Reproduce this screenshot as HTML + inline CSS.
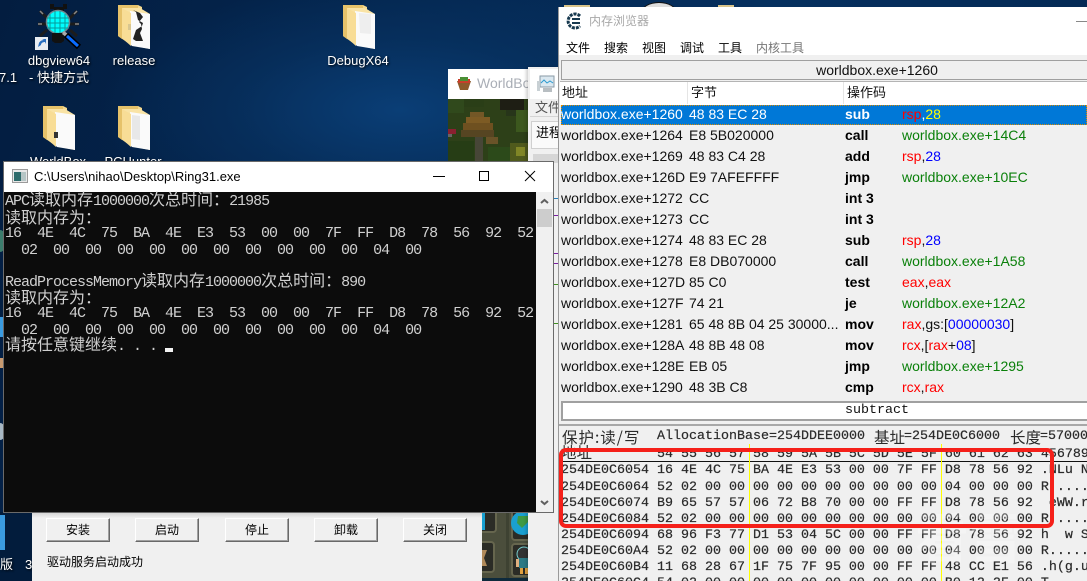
<!DOCTYPE html>
<html><head><meta charset="utf-8">
<style>
html,body{margin:0;padding:0;width:1087px;height:581px;overflow:hidden;background:#04244f}
body{position:relative;font-family:"Liberation Sans","Noto Sans CJK SC",sans-serif}
div,span{position:absolute;white-space:pre}
.dl{color:#fff;font-size:13px;line-height:17px;text-shadow:1px 1px 2px #000;text-align:center}
.con{left:5px;color:#d0d0d0;font:15px/16px "Liberation Mono",monospace;letter-spacing:-1px;height:16px}
.con i{font:normal 16px/16px "WenQuanYi Zen Hei","Noto Sans CJK SC",sans-serif;letter-spacing:0}
.btn{top:518px;width:62px;height:22px;background:#f0f0f0;border:1px solid;border-color:#fff #696969 #696969 #fff;box-shadow:inset -1px -1px 0 #a0a0a0;color:#000;font-size:12px;line-height:23px;text-align:center}
.m{top:40px;font-size:12px;line-height:16px;color:#000}
.r{left:561px;width:526px;height:21px;font-size:14px;line-height:21px;color:#111;font-family:"Liberation Sans",sans-serif}
.r span{top:0}
.a{left:0}.b{left:128px}.o{left:284px;font-weight:bold;color:#000}.g{left:341px;color:#0a800a}.x{left:341px}
.R{position:static;color:#f00}.B{position:static;color:#00f}.K{position:static;color:#111}
.h{left:561px;width:526px;height:16px;font:13.33px/16px "Liberation Mono",monospace;color:#2a2a2a;-webkit-text-stroke:.2px #2a2a2a}
.c{font:15.5px/16px "Noto Sans CJK SC",sans-serif;-webkit-text-stroke:0;top:0}
</style></head><body>

<!-- desktop background -->
<div style="left:0;top:0;width:1087px;height:581px;background:radial-gradient(ellipse 300px 130px at 400px 110px,#0a3e76 0%,rgba(8,52,100,.6) 55%,rgba(4,36,79,0) 100%),linear-gradient(110deg,#031d40 0%,#04264f 30%,#05305f 60%,#04264f 100%)"></div>
<div style="left:0;top:512px;width:32px;height:69px;background:#021c3c"></div>

<!-- desktop icons -->
<svg style="position:absolute;left:0;top:0" width="560" height="170">
<defs>
<g id="fo">
<path d="M0 1h20l4 2v36H10L0 32z" fill="#f5d98e"/>
<path d="M0 1h20v3H4v31L0 32z" fill="#e6c26a"/>
<path d="M4 4h18l10 6v35l-10-2-8-2-10-7z" fill="#f9e3a5"/>
<path d="M12 7l20 3v35l-18-3-2-2z" fill="#fafafa"/>
<path d="M4 4v30l9 8V9z" fill="#f8dd96"/>
</g>
</defs>
<!-- bug -->
<g>
<path d="M50 4h4v5h-4zM63 4h4v5h-4zM54 7h10v5H54z" fill="#111"/>
<path d="M40 11l8 8M77 11l-8 8M38 24h9M70 24h9M40 36l7-6M77 36l-7-6" stroke="#1c1c1c" stroke-width="3" fill="none"/>
<path d="M40 11l3 3M77 11l-3 3M38 24h4M75 24h4" stroke="#888" stroke-width="1.500"/>
<circle cx="58" cy="22" r="11.500" fill="#0ff"/>
<circle cx="58" cy="22" r="11.500" fill="none" stroke="#6f8a90" stroke-width="1.500"/>
<path d="M55 11v22M60 11v22M65 14v16M50 14v16M47 18h22M47 23h22M47 28h22" stroke="#089a9a" stroke-width="1"/>
<path d="M52 33h12v8l-3 2h-6l-3-2z" fill="#111"/>
<path d="M64 31l4 3-2 3-4-3z" fill="#aaa"/>
<path d="M66 35l13 12" stroke="#000" stroke-width="6"/>
<path d="M67 36l11 10" stroke="#0a6cff" stroke-width="3"/>
</g>
<rect x="35" y="37" width="13" height="13" fill="#e9edf2"/>
<path d="M38 47l1-4c1-2 3-3 5-3l-2-1h4v5l-1-2c-2 0-4 1-4 3z" fill="#2a6fc0"/>
<use href="#fo" x="118" y="4"/>
<path d="M133 10l3 2 2 8 5 3-1 3-6 4-3 9 3 2 7 0-3-8 2-4-1-5-2-2 4-5-3-4z" fill="#222"/>
<rect x="128" y="24" width="3" height="6" fill="#d8c690"/>
<use href="#fo" x="343" y="4"/>
<path d="M359 13l12 1v20l-11-1z" fill="#eee"/>
<use href="#fo" x="43" y="105"/>
<rect x="54" y="132" width="4" height="6" fill="#333"/>
<use href="#fo" x="118" y="105"/>
<path d="M132 115l8 1v24l-8-1z" fill="#e8e8e8"/>
</svg>
<div class="dl" style="left:19px;top:52px;width:80px">dbgview64</div>
<div class="dl" style="left:19px;top:69px;width:80px">- 快捷方式</div>
<div class="dl" style="left:94px;top:52px;width:80px">release</div>
<div class="dl" style="left:318px;top:52px;width:80px">DebugX64</div>
<div class="dl" style="left:-1px;top:69px">7.1</div>
<div class="dl" style="left:18px;top:153px;width:80px">WorldBox</div>
<div class="dl" style="left:93px;top:153px;width:80px">PCHunter</div>
<div class="dl" style="left:0;top:556px">版</div>
<div class="dl" style="left:25px;top:556px">3</div>
<!-- left-edge scraps -->
<div style="left:0;top:230px;width:4px;height:22px;background:#3c7d6d;border-radius:0 4px 4px 0"></div>
<div style="left:0;top:317px;width:4px;height:20px;background:#3a9be0"></div>
<div style="left:0;top:358px;width:4px;height:10px;background:#c89a70"></div>
<div style="left:0;top:423px;width:4px;height:17px;background:#a8b8c4;border-radius:0 10px 10px 0"></div>
<div style="left:0;top:515px;width:5px;height:35px;background:#3a9be0"></div>

<!-- WorldBox window -->
<div style="left:448px;top:69px;width:82px;height:30px;background:#fff"></div>
<svg style="position:absolute;left:456px;top:76px" width="16" height="16"><path d="M1 5h14l-3 9H4z" fill="#8c5a2b"/><path d="M2 3h12v4H2z" fill="#c83f2b"/><path d="M4 1h8v4H4z" fill="#4a8f35"/></svg>
<div style="left:477px;top:75px;font-size:14px;line-height:17px;color:#a9aeb6;width:53px;overflow:hidden">WorldBox</div>
<svg style="position:absolute;left:448px;top:99px" width="82" height="64" shape-rendering="crispEdges">
<rect width="82" height="64" fill="#2d4018"/>
<rect x="0" y="0" width="16" height="14" fill="#30491c"/>
<rect x="16" y="0" width="20" height="8" fill="#2a3e17"/>
<rect x="52" y="0" width="24" height="11" fill="#1e1e14"/>
<rect x="58" y="11" width="10" height="6" fill="#27351a"/>
<rect x="68" y="11" width="14" height="22" fill="#3c581e"/>
<rect x="62" y="44" width="20" height="20" fill="#4f5a1c"/>
<rect x="68" y="48" width="9" height="9" fill="#808626"/>
<rect x="0" y="30" width="8" height="5" fill="#8a2030"/>
<rect x="0" y="35" width="4" height="3" fill="#666"/>
<rect x="22" y="13" width="14" height="5" fill="#735726"/>
<rect x="18" y="18" width="24" height="6" fill="#7d5b24"/>
<rect x="15" y="24" width="30" height="7" fill="#6e5020"/>
<rect x="13" y="31" width="33" height="7" fill="#564522"/>
<rect x="38" y="38" width="12" height="7" fill="#695328"/>
<rect x="27" y="38" width="8" height="26" fill="#474637"/>
<rect x="0" y="42" width="26" height="22" fill="#263d15"/>
<rect x="40" y="48" width="22" height="16" fill="#2c4a1a"/>
</svg>
<div style="left:482px;top:512px;width:46px;height:69px;background:#4b4e3c"></div>
<svg style="position:absolute;left:482px;top:512px" width="46" height="69">
<rect x="-8" y="-6" width="22" height="26" rx="3" fill="#2b2c26" stroke="#66664e" stroke-width="2"/>
<rect x="0" y="0" width="3" height="18" fill="#18a0d0"/>
<rect x="-8" y="30" width="20" height="30" rx="3" fill="#2b2c26" stroke="#66664e" stroke-width="2"/>
<path d="M0 38h5l-3 8 3 8H0z" fill="#b08a5a"/>
<rect x="30" y="-6" width="22" height="34" rx="3" fill="#2b2c26" stroke="#66664e" stroke-width="2"/>
<circle cx="41" cy="11" r="12" fill="#1aa0d0"/><path d="M36 4h10v6l-6 6-5-5z" fill="#3f9a45"/>
<rect x="30" y="32" width="22" height="32" rx="3" fill="#2b2c26" stroke="#66664e" stroke-width="2"/>
<circle cx="42" cy="42" r="7" fill="#333" stroke="#7cc"/><rect x="37" y="46" width="9" height="10" fill="#2d7a85"/><rect x="34" y="47" width="3" height="8" fill="#e0b080"/>
<rect x="38" y="56" width="3" height="6" fill="#e0a040"/><rect x="43" y="56" width="3" height="6" fill="#e0a040"/>
<rect x="0" y="66" width="46" height="3" fill="#0e2a3c"/>
<rect x="24" y="0" width="3" height="66" fill="#3e4232"/>
</svg>

<!-- PCHunter window -->
<div style="left:528px;top:67px;width:31px;height:514px;background:#f0f0f0;box-shadow:-2px 0 3px rgba(0,0,0,.18)"></div>
<div style="left:530px;top:69px;width:29px;height:30px;background:#fff"></div>
<svg style="position:absolute;left:536px;top:75px" width="20" height="20"><rect x="4" y="1" width="14" height="11" fill="#dbe8f0" stroke="#8a9aa6"/><path d="M5 8l3-3 3 3 3-2 3 2" fill="none" stroke="#2d9bd0"/><rect x="1" y="6" width="3" height="10" fill="#c8d0d4"/><rect x="7" y="13" width="9" height="4" fill="#b8bec2"/></svg>
<div style="left:535px;top:99px;font-size:13px;line-height:17px;color:#555">文件</div>
<div style="left:530px;top:116px;width:29px;height:1px;background:#d4d4d4"></div>
<div style="left:531px;top:121px;width:28px;height:28px;background:#fafafa;border:1px solid #d0d0d0;border-right:0;box-sizing:border-box"></div>
<div style="left:536px;top:124px;font-size:13px;line-height:17px;color:#000">进程</div>
<div style="left:533px;top:154px;width:26px;height:9px;background:#d6d6d6"></div>
<div style="left:553px;top:198px;width:6px;height:1px;background:#2a7fb8"></div>
<div style="left:553px;top:215px;width:6px;height:1px;background:#7a1fa2"></div>
<div style="left:553px;top:253px;width:6px;height:1px;background:#7a1fa2"></div>
<div style="left:553px;top:263px;width:6px;height:1px;background:#7a1fa2"></div>
<div style="left:553px;top:284px;width:6px;height:1px;background:#3f8f1f"></div>
<div style="left:553px;top:323px;width:6px;height:1px;background:#3f8f1f"></div>

<!-- driver dialog -->
<div style="left:32px;top:512px;width:450px;height:69px;background:#f0f0f0"></div>
<div style="left:32px;top:512px;width:450px;height:6px;background:linear-gradient(#d0d0d0,#f0f0f0)"></div>
<div class="btn" style="left:46px">安装</div>
<div class="btn" style="left:135px">启动</div>
<div class="btn" style="left:225px">停止</div>
<div class="btn" style="left:314px">卸载</div>
<div class="btn" style="left:403px">关闭</div>
<div style="left:47px;top:554px;font-size:12px;line-height:16px;color:#000">驱动服务启动成功</div>

<!-- console -->
<div style="left:4px;top:162px;width:549px;height:350px;background:#fff;box-shadow:0 0 0 1px #6a6a6a"></div>
<svg style="position:absolute;left:12px;top:169px" width="18" height="16"><rect x=".5" y=".5" width="15" height="13" fill="#e8e8e8" stroke="#9a9a9a"/><rect x="2" y="3" width="7" height="9" fill="#2d6b6b"/><rect x="9" y="3" width="5" height="9" fill="#b5c5c5"/></svg>
<div style="left:34px;top:169px;font-size:13px;line-height:16px;color:#000">C:\Users\nihao\Desktop\Ring31.exe</div>
<div style="left:433px;top:176px;width:12px;height:1px;background:#000"></div>
<div style="left:479px;top:171px;width:8px;height:8px;border:1px solid #000"></div>
<svg style="position:absolute;left:524px;top:170px" width="12" height="12"><path d="M1 1l10 10M11 1L1 11" stroke="#000"/></svg>
<div style="left:4px;top:192px;width:532px;height:320px;background:#0c0c0c"></div>
<div style="left:536px;top:192px;width:17px;height:320px;background:#f0f0f0"></div>
<div style="left:537px;top:209px;width:15px;height:18px;background:#cdcdcd"></div>
<svg style="position:absolute;left:536px;top:192px" width="17" height="320"><path d="M5 11l3.500-3 3.500 3" fill="none" stroke="#606060" stroke-width="2"/><path d="M5 309l3.500 3 3.500-3" fill="none" stroke="#606060" stroke-width="2"/></svg>

<div class="con" style="top:190px">APC<i>读取内存</i>1000000<i>次总时间：</i>21985</div>
<div class="con" style="top:208px"><i>读取内存为：</i></div>
<div class="con" style="top:226px">16  4E  4C  75  BA  4E  E3  53  00  00  7F  FF  D8  78  56  92  52</div>
<div class="con" style="top:243px">  02  00  00  00  00  00  00  00  00  00  00  04  00</div>
<div class="con" style="top:271px">ReadProcessMemory<i>读取内存</i>1000000<i>次总时间：</i>890</div>
<div class="con" style="top:288px"><i>读取内存为：</i></div>
<div class="con" style="top:306px">16  4E  4C  75  BA  4E  E3  53  00  00  7F  FF  D8  78  56  92  52</div>
<div class="con" style="top:323px">  02  00  00  00  00  00  00  00  00  00  00  04  00</div>
<div class="con" style="top:335px"><i>请按任意键继续</i>. . .</div>
<div style="left:165px;top:348px;width:8px;height:4px;background:#f2f2f2"></div>

<!-- memory viewer -->
<div style="left:0;top:0;width:1087px;height:7px;overflow:hidden">
<div style="left:564px;top:5px;width:26px;height:2px;background:#d9c48a"></div>
<div style="left:718px;top:5px;width:16px;height:2px;background:#d9c48a"></div>
<div style="left:641px;top:2px;width:34px;height:20px;background:#ddd;border-radius:50%;border:1px solid #111"></div>
</div>
<div style="left:559px;top:7px;width:528px;height:574px;background:#f0f0f0;box-shadow:-1px 0 0 #9a9a9a"></div>
<div style="left:559px;top:7px;width:528px;height:48px;background:#fff"></div>
<svg style="position:absolute;left:566px;top:12px" width="18" height="18"><path d="M14 4A7 7 0 1 0 14 14" fill="none" stroke="#17394f" stroke-width="3" stroke-dasharray="3 1"/><path d="M6 7h8M6 11h8" stroke="#17394f" stroke-width="2"/></svg>
<div style="left:589px;top:13px;font-size:12px;line-height:16px;color:#a8a8a8">内存浏览器</div>
<div style="left:1076px;top:21px;width:11px;height:1px;background:#888"></div>
<div class="m" style="left:566px">文件</div>
<div class="m" style="left:604px">搜索</div>
<div class="m" style="left:642px">视图</div>
<div class="m" style="left:680px">调试</div>
<div class="m" style="left:718px">工具</div>
<div class="m" style="left:756px;color:#777">内核工具</div>

<div style="left:561px;top:60px;width:526px;height:20px;background:#f0f0f0;border:1px solid #a0a0a0;border-right:0;box-sizing:border-box"></div>
<div style="left:560px;top:61px;width:634px;height:19px;text-align:center;font-size:14px;line-height:19px;color:#111">worldbox.exe+1260</div>
<div style="left:560px;top:81px;width:527px;height:24px;background:#fff;border-top:1px solid #b4b4b4;box-sizing:border-box"></div>
<div style="left:562px;top:84px;font-size:13px;line-height:17px;color:#111">地址</div>
<div style="left:691px;top:84px;font-size:13px;line-height:17px;color:#111">字节</div>
<div style="left:847px;top:84px;font-size:13px;line-height:17px;color:#111">操作码</div>
<div style="left:687px;top:82px;width:1px;height:22px;background:#e5e5e5"></div>
<div style="left:843px;top:82px;width:1px;height:22px;background:#e5e5e5"></div>

<div style="left:561px;top:105px;width:526px;height:20px;background:#0078d7;outline:1px dotted #d98a00;outline-offset:-1px"></div>
<div class="r" style="top:104px;color:#fff"><span class="a">worldbox.exe+1260</span><span class="b">48 83 EC 28</span><span class="o" style="color:#fff">sub</span><span class="x"><span class="R">rsp</span><span class="K" style="color:#fff">,</span><span class="K" style="color:#ff0">28</span></span></div>
<div class="r" style="top:125px"><span class="a">worldbox.exe+1264</span><span class="b">E8 5B020000</span><span class="o">call</span><span class="g">worldbox.exe+14C4</span></div>
<div class="r" style="top:146px"><span class="a">worldbox.exe+1269</span><span class="b">48 83 C4 28</span><span class="o">add</span><span class="x"><span class="R">rsp</span><span class="K">,</span><span class="B">28</span></span></div>
<div class="r" style="top:167px"><span class="a">worldbox.exe+126D</span><span class="b">E9 7AFEFFFF</span><span class="o">jmp</span><span class="g">worldbox.exe+10EC</span></div>
<div class="r" style="top:188px"><span class="a">worldbox.exe+1272</span><span class="b">CC</span><span class="o">int 3</span></div>
<div class="r" style="top:209px"><span class="a">worldbox.exe+1273</span><span class="b">CC</span><span class="o">int 3</span></div>
<div class="r" style="top:230px"><span class="a">worldbox.exe+1274</span><span class="b">48 83 EC 28</span><span class="o">sub</span><span class="x"><span class="R">rsp</span><span class="K">,</span><span class="B">28</span></span></div>
<div class="r" style="top:251px"><span class="a">worldbox.exe+1278</span><span class="b">E8 DB070000</span><span class="o">call</span><span class="g">worldbox.exe+1A58</span></div>
<div class="r" style="top:272px"><span class="a">worldbox.exe+127D</span><span class="b">85 C0</span><span class="o">test</span><span class="x"><span class="R">eax</span><span class="K">,</span><span class="R">eax</span></span></div>
<div class="r" style="top:293px"><span class="a">worldbox.exe+127F</span><span class="b">74 21</span><span class="o">je</span><span class="g">worldbox.exe+12A2</span></div>
<div class="r" style="top:314px"><span class="a">worldbox.exe+1281</span><span class="b">65 48 8B 04 25 30000...</span><span class="o">mov</span><span class="x"><span class="R">rax</span><span class="K">,gs:[</span><span class="B">00000030</span><span class="K">]</span></span></div>
<div class="r" style="top:335px"><span class="a">worldbox.exe+128A</span><span class="b">48 8B 48 08</span><span class="o">mov</span><span class="x"><span class="R">rcx</span><span class="K">,[</span><span class="R">rax</span><span class="K">+</span><span class="B">08</span><span class="K">]</span></span></div>
<div class="r" style="top:356px"><span class="a">worldbox.exe+128E</span><span class="b">EB 05</span><span class="o">jmp</span><span class="g">worldbox.exe+1295</span></div>
<div class="r" style="top:377px"><span class="a">worldbox.exe+1290</span><span class="b">48 3B C8</span><span class="o">cmp</span><span class="x"><span class="R">rcx</span><span class="K">,</span><span class="R">rax</span></span></div>

<div style="left:561px;top:401px;width:526px;height:20px;background:#fff;border:2px solid #a0a0a0;border-right:0;box-sizing:border-box"></div>
<div style="left:560px;top:402px;width:634px;height:17px;text-align:center;font:13.33px/17px 'Liberation Mono',monospace;color:#111">subtract</div>
<div style="left:559px;top:424px;width:528px;height:2px;background:#a8a8a8"></div>

<div class="h" style="top:429px"><span class="c" style="left:1px;letter-spacing:1px">保护:读/写</span><span style="left:96px;top:0">AllocationBase=254DDEE0000</span><span class="c" style="left:313px">基址</span><span style="left:343px;top:0">=254DE0C6000</span><span class="c" style="left:449px">长度</span><span style="left:479px;top:0">=57000</span></div>
<div class="h" style="top:444px"><span class="c" style="left:0">地址</span></div>
<div class="h" style="top:447px">            54 55 56 57 58 59 5A 5B 5C 5D 5E 5F 60 61 62 63 456789</div>
<div style="left:561px;top:461px;width:526px;height:1px;background:#111"></div>
<div style="left:749px;top:444px;width:1px;height:137px;background:#ff0"></div>
<div style="left:941px;top:444px;width:1px;height:137px;background:#ff0"></div>
<div class="h" style="top:463px">254DE0C6054 16 4E 4C 75 BA 4E E3 53 00 00 7F FF D8 78 56 92 .NLu N</div>
<div class="h" style="top:480px">254DE0C6064 52 02 00 00 00 00 00 00 00 00 00 00 04 00 00 00 R ....</div>
<div class="h" style="top:496px">254DE0C6074 B9 65 57 57 06 72 B8 70 00 00 FF FF D8 78 56 92  eWW.r</div>
<div class="h" style="top:512px">254DE0C6084 52 02 00 00 00 00 00 00 00 00 00 00 04 00 00 00 R ....</div>
<div class="h" style="top:528px">254DE0C6094 68 96 F3 77 D1 53 04 5C 00 00 FF FF D8 78 56 92 h  w S</div>
<div class="h" style="top:544px">254DE0C60A4 52 02 00 00 00 00 00 00 00 00 00 00 04 00 00 00 R.....</div>
<div class="h" style="top:560px">254DE0C60B4 11 68 28 67 1F 75 7F 95 00 00 FF FF 48 CC E1 56 .h(g.u</div>
<div class="h" style="top:576px">254DE0C60C4 54 02 00 00 00 00 00 00 00 00 00 00 B0 12 2F 00 T.....</div>

<!-- watermark -->
<div style="left:915px;top:505px;font:bold 54px/60px 'Noto Sans CJK SC',sans-serif;color:rgba(255,255,255,.28)">看雪</div>

<!-- red annotation box -->
<div style="left:559px;top:448px;width:495px;height:80px;box-sizing:border-box;border:4px solid #f5201a;border-radius:7px"></div>
</body></html>
